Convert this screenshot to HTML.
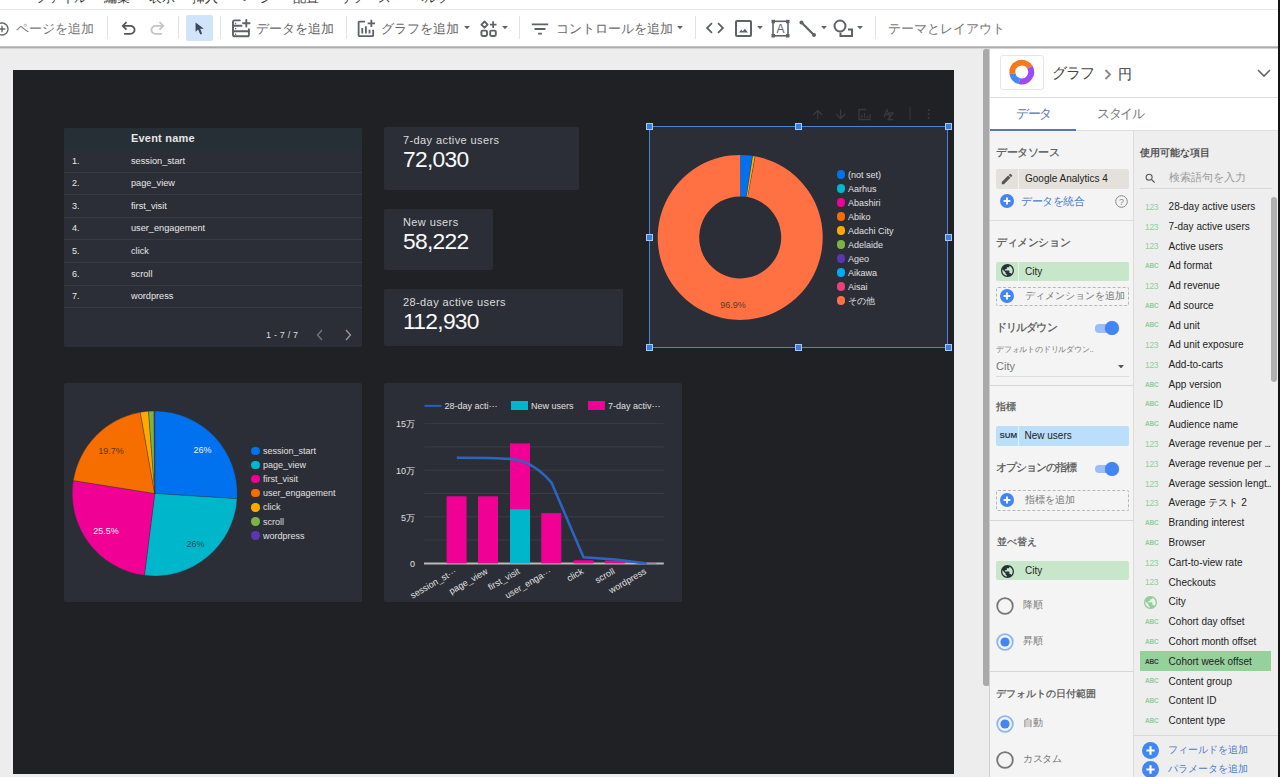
<!DOCTYPE html><html><head><meta charset="utf-8"><title>Looker Studio</title><style>*{box-sizing:border-box;margin:0;padding:0}
html,body{width:1280px;height:777px;overflow:hidden}
body{position:relative;background:#ededed;font-family:"Liberation Sans",sans-serif;color:#333}
.a{position:absolute;white-space:nowrap}
.sep{position:absolute;top:16px;width:1px;height:23px;background:#e3e3e3}
.tb{font-size:13px;color:#6b6b6b;line-height:13px}
.card{position:absolute;background:#2c2e37;border-radius:2px}
.dk{font-size:10px;color:#e8e8e8;line-height:10px}
.pl{font-size:11px;line-height:11px}
</style></head><body>
<div class="a" style="left:0;top:0;width:1280px;height:10px;background:#fff;border-bottom:1px solid #e6e6e6;overflow:hidden">
<div class="a" style="left:35px;top:-9.3px;font-size:13px;line-height:13px;color:#3a3a3a">ファイル</div>
<div class="a" style="left:104px;top:-9.3px;font-size:13px;line-height:13px;color:#3a3a3a">編集</div>
<div class="a" style="left:149px;top:-9.3px;font-size:13px;line-height:13px;color:#3a3a3a">表示</div>
<div class="a" style="left:192px;top:-9.3px;font-size:13px;line-height:13px;color:#3a3a3a">挿入</div>
<div class="a" style="left:233px;top:-9.3px;font-size:13px;line-height:13px;color:#3a3a3a">ページ</div>
<div class="a" style="left:293px;top:-9.3px;font-size:13px;line-height:13px;color:#3a3a3a">配置</div>
<div class="a" style="left:339px;top:-9.3px;font-size:13px;line-height:13px;color:#3a3a3a">リソース</div>
<div class="a" style="left:411px;top:-9.3px;font-size:13px;line-height:13px;color:#3a3a3a">ヘルプ</div>
</div>
<div class="a" style="left:0;top:10px;width:1280px;height:36px;background:#fff"></div>
<div class="a" style="left:0;top:46px;width:1280px;height:1px;background:#c4c4c4"></div>
<div class="a" style="left:0;top:47px;width:1280px;height:1px;background:#acacac"></div>
<div class="a" style="left:0;top:48px;width:1280px;height:1px;background:#d4d4d4"></div>
<svg class="a" style="left:-6px;top:21px" width="16" height="16" viewBox="0 0 24 24" ><path fill="#5f6368" d="M13 7h-2v4H7v2h4v4h2v-4h4v-2h-4V7zm-1-5C6.48 2 2 6.48 2 12s4.48 10 10 10 10-4.48 10-10S17.52 2 12 2zm0 18c-4.41 0-8-3.59-8-8s3.59-8 8-8 8 3.59 8 8-3.59 8-8 8z"/></svg>
<div class="a tb" style="left:16px;top:22px;color:#777">ページを追加</div>
<div class="sep" style="left:107px;top:16px"></div>
<div class="sep" style="left:178px;top:16px"></div>
<div class="sep" style="left:220px;top:16px"></div>
<div class="sep" style="left:346px;top:16px"></div>
<div class="sep" style="left:519px;top:16px"></div>
<div class="sep" style="left:695px;top:16px"></div>
<div class="sep" style="left:875px;top:16px"></div>
<svg class="a" style="left:117.8px;top:17.8px" width="21" height="21" viewBox="0 -960 960 960" ><path fill="#555" d="M280-200v-80h284q63 0 109.5-40T720-420q0-60-46.5-100T564-560H312l104 104-56 56-200-200 200-200 56 56-104 104h252q97 0 166.5 63T800-420q0 94-69.5 157T564-200H280Z"/></svg>
<svg class="a" style="left:146.8px;top:17.8px" width="21" height="21" viewBox="0 -960 960 960" ><path fill="#c4c4c4" d="M396-200q-97 0-166.5-63T160-420q0-94 69.5-157T396-640h252L544-744l56-56 200 200-200 200-56-56 104-104H396q-63 0-109.5 40T240-420q0 60 46.5 100T396-280h284v80H396Z"/></svg>
<div class="a" style="left:186px;top:14.8px;width:26.5px;height:26.5px;background:#d2e3fc;border-radius:2px"></div>
<svg class="a" style="left:194.8px;top:22.3px" width="10.5" height="13.5" viewBox="0 0 10 13" ><path fill="#3c4858" d="M0.5 0.5 L0.5 9.5 L3 7.3 L5 12 L6.8 11.2 L4.9 6.6 L8.5 6.6 Z"/></svg>
<svg class="a" style="left:231px;top:19px" width="20" height="19" viewBox="0 0 20 19" ><g fill="none" stroke="#5f6368" stroke-width="1.9" stroke-linecap="round"><path d="M8.8 1.4H3.6Q2 1.4 2 3V15.7Q2 17.3 3.6 17.3H16.3Q17.9 17.3 17.9 15.7V10.2"/><path d="M2 6.7H10.5M2 12.3H17.9M15.3 0.9V7.5M12 4.2H18.6"/></g><g fill="#5f6368"><path d="M4 3.4l1.6 1-1.6 1z"/><path d="M4 8.4l1.6 1-1.6 1z"/><path d="M4 14.2l1.6 1-1.6 1z"/></g></svg>
<div class="a tb" style="left:256px;top:22px;color:#666">データを追加</div>
<svg class="a" style="left:355.3px;top:17.6px" width="21.8" height="21.8" viewBox="0 0 24 24" ><path fill="#5f6368" d="M22 5v2h-3v3h-2V7h-3V5h3V2h2v3h3zm-3 14H5V5h6V3H5c-1.1 0-2 .9-2 2v14c0 1.1.9 2 2 2h14c1.1 0 2-.9 2-2v-6h-2v6zm-4-6v4h2v-4h-2zm-4 4h2V9h-2v8zm-2 0v-6H7v6h2z"/></svg>
<div class="a tb" style="left:381px;top:22px;color:#666">グラフを追加</div>
<svg class="a" style="left:463.5px;top:26.3px" width="6" height="3.3" viewBox="0 0 7 4" ><path d="M0 0h7L3.5 4z" fill="#5f6368"/></svg>
<svg class="a" style="left:480px;top:20px" width="18" height="17" viewBox="0 0 18 17" ><g fill="none" stroke="#5f6368" stroke-width="1.9" stroke-linejoin="round"><path d="M4.5 1.5 L7.6 4.6 L4.5 7.7 L1.4 4.6 Z"/><rect x="1.4" y="10.6" width="5.6" height="5.4" rx="1.2"/><rect x="10.2" y="10.6" width="5.6" height="5.4" rx="1.2"/></g><path fill="#5f6368" d="M12.3 1.3h1.7v6.6h-1.7zM9.9 3.75h6.6v1.7h-6.6z"/></svg>
<svg class="a" style="left:501.5px;top:26.3px" width="6" height="3.3" viewBox="0 0 7 4" ><path d="M0 0h7L3.5 4z" fill="#5f6368"/></svg>
<svg class="a" style="left:529px;top:18px" width="22" height="22" viewBox="0 0 24 24" ><path fill="#5f6368" d="M10 18h4v-2h-4v2zM3 6v2h18V6H3zm3 7h12v-2H6v2z"/></svg>
<div class="a tb" style="left:556px;top:22px;color:#6b6b6b">コントロールを追加</div>
<svg class="a" style="left:676.5px;top:26.3px" width="6" height="3.3" viewBox="0 0 7 4" ><path d="M0 0h7L3.5 4z" fill="#5f6368"/></svg>
<svg class="a" style="left:704px;top:17px" width="22" height="22" viewBox="0 0 24 24" ><path fill="#5f6368" d="M9.4 16.6L4.8 12l4.6-4.6L8 6l-6 6 6 6 1.4-1.4zm5.2 0l4.6-4.6-4.6-4.6L16 6l6 6-6 6-1.4-1.4z"/></svg>
<svg class="a" style="left:734px;top:19px" width="19" height="19" viewBox="0 0 19 19" ><rect x="2" y="2" width="15" height="15" rx="1" fill="none" stroke="#5f6368" stroke-width="2"/><path fill="#5f6368" d="M5 13.5 L7.3 10.5 L8.8 12.2 L10.8 9.8 L14 13.5Z"/></svg>
<svg class="a" style="left:756.5px;top:26.3px" width="6" height="3.3" viewBox="0 0 7 4" ><path d="M0 0h7L3.5 4z" fill="#5f6368"/></svg>
<svg class="a" style="left:771px;top:19px" width="19" height="19" viewBox="0 0 19 19" ><rect x="2" y="2.3" width="15" height="14.5" fill="none" stroke="#5f6368" stroke-width="1.6"/><g fill="#5f6368"><rect x="0.5" y="0.8" width="3.5" height="3.5"/><rect x="15" y="0.8" width="3.5" height="3.5"/><rect x="0.5" y="15" width="3.5" height="3.5"/><rect x="15" y="15" width="3.5" height="3.5"/></g><text x="9.5" y="14.3" font-size="12" text-anchor="middle" fill="#5f6368" font-family="Liberation Sans">A</text></svg>
<svg class="a" style="left:799px;top:20px" width="18" height="18" viewBox="0 0 18 18" ><path d="M2.5 2.5 L15 15" stroke="#5f6368" stroke-width="2.2"/><circle cx="2.5" cy="2.5" r="2" fill="#5f6368"/><circle cx="15" cy="15" r="2" fill="#5f6368"/></svg>
<svg class="a" style="left:820.5px;top:26.3px" width="6" height="3.3" viewBox="0 0 7 4" ><path d="M0 0h7L3.5 4z" fill="#5f6368"/></svg>
<svg class="a" style="left:833px;top:19px" width="21" height="19" viewBox="0 0 21 19" ><circle cx="7" cy="7" r="5.5" fill="none" stroke="#5f6368" stroke-width="2"/><path d="M15 10.5 H19 V17 H7.5 V13.5" fill="none" stroke="#5f6368" stroke-width="2"/></svg>
<svg class="a" style="left:856.5px;top:26.3px" width="6" height="3.3" viewBox="0 0 7 4" ><path d="M0 0h7L3.5 4z" fill="#5f6368"/></svg>
<div class="a tb" style="left:888px;top:22px;color:#777">テーマとレイアウト</div>
<div class="a" style="left:13px;top:70px;width:941px;height:704px;background:#202124"></div>
<div class="card" style="left:64px;top:128px;width:298px;height:219px;overflow:hidden">
<div class="a" style="left:0;top:0;width:298px;height:22px;background:#262f35"></div>
<div class="a" style="left:67px;top:5px;font-size:11px;line-height:11px;font-weight:bold;color:#e6e6e6;letter-spacing:0.2px">Event name</div>
<div class="a" style="left:0;top:43.6px;width:298px;height:1px;background:#383b45"></div>
<div class="a dk" style="left:8px;top:27.5px;font-size:9px">1.</div>
<div class="a dk" style="left:67px;top:27.5px;font-size:9.2px">session_start</div>
<div class="a" style="left:0;top:66.2px;width:298px;height:1px;background:#383b45"></div>
<div class="a dk" style="left:8px;top:50.1px;font-size:9px">2.</div>
<div class="a dk" style="left:67px;top:50.1px;font-size:9.2px">page_view</div>
<div class="a" style="left:0;top:88.8px;width:298px;height:1px;background:#383b45"></div>
<div class="a dk" style="left:8px;top:72.7px;font-size:9px">3.</div>
<div class="a dk" style="left:67px;top:72.7px;font-size:9.2px">first_visit</div>
<div class="a" style="left:0;top:111.4px;width:298px;height:1px;background:#383b45"></div>
<div class="a dk" style="left:8px;top:95.3px;font-size:9px">4.</div>
<div class="a dk" style="left:67px;top:95.3px;font-size:9.2px">user_engagement</div>
<div class="a" style="left:0;top:134.0px;width:298px;height:1px;background:#383b45"></div>
<div class="a dk" style="left:8px;top:117.9px;font-size:9px">5.</div>
<div class="a dk" style="left:67px;top:117.9px;font-size:9.2px">click</div>
<div class="a" style="left:0;top:156.6px;width:298px;height:1px;background:#383b45"></div>
<div class="a dk" style="left:8px;top:140.5px;font-size:9px">6.</div>
<div class="a dk" style="left:67px;top:140.5px;font-size:9.2px">scroll</div>
<div class="a" style="left:0;top:179.2px;width:298px;height:1px;background:#383b45"></div>
<div class="a dk" style="left:8px;top:163.1px;font-size:9px">7.</div>
<div class="a dk" style="left:67px;top:163.1px;font-size:9.2px">wordpress</div>
<div class="a dk" style="left:202px;top:202px;font-size:9px;color:#ddd;letter-spacing:0.2px">1 - 7 / 7</div>
<svg class="a" style="left:252px;top:201px" width="8" height="12" viewBox="0 0 8 12"><path d="M6 1L1.5 6 6 11" fill="none" stroke="#777" stroke-width="1.3"/></svg>
<svg class="a" style="left:280px;top:201px" width="8" height="12" viewBox="0 0 8 12"><path d="M2 1l4.5 5L2 11" fill="none" stroke="#999" stroke-width="1.3"/></svg>
</div>
<div class="card" style="left:384px;top:127px;width:195px;height:63px">
<div class="a" style="left:19px;top:8px;font-size:11px;line-height:11px;color:#dcdcdc;letter-spacing:0.4px">7-day active users</div>
<div class="a" style="left:19px;top:20.8px;font-size:22.8px;line-height:22.8px;color:#fafafa;letter-spacing:-0.7px">72,030</div>
</div>
<div class="card" style="left:384px;top:209px;width:109px;height:61px">
<div class="a" style="left:19px;top:8px;font-size:11px;line-height:11px;color:#dcdcdc;letter-spacing:0.4px">New users</div>
<div class="a" style="left:19px;top:20.8px;font-size:22.8px;line-height:22.8px;color:#fafafa;letter-spacing:-0.7px">58,222</div>
</div>
<div class="card" style="left:384px;top:289px;width:239px;height:57px">
<div class="a" style="left:19px;top:8px;font-size:11px;line-height:11px;color:#dcdcdc;letter-spacing:0.4px">28-day active users</div>
<div class="a" style="left:19px;top:20.8px;font-size:22.8px;line-height:22.8px;color:#fafafa;letter-spacing:-0.7px">112,930</div>
</div>
<div class="card" style="left:649px;top:126px;width:299px;height:222px"></div>
<svg class="a" style="left:0;top:0" width="1280" height="777"><path d="M740.20,154.90 A82.5,82.5 0 0 1 752.34,155.80 L746.23,196.85 A41,41 0 0 0 740.20,196.40 Z" fill="#0072f0"/><path d="M752.85,155.88 A82.5,82.5 0 0 1 754.89,156.22 L747.50,197.06 A41,41 0 0 0 746.49,196.88 Z" fill="#ffa800"/><path d="M755.40,156.31 A82.5,82.5 0 1 1 740.20,154.90 L740.20,196.40 A41,41 0 1 0 747.76,197.10 Z" fill="#ff7043"/><text x="733" y="307.5" font-size="9" fill="#5a3a30" text-anchor="middle" font-family="Liberation Sans">96.9%</text></svg>
<div class="a" style="left:836.8px;top:170.3px;width:8.4px;height:8.4px;border-radius:50%;background:#0072f0"></div>
<div class="a" style="left:848px;top:169.5px;font-size:9px;line-height:10px;color:#e0e0e0">(not set)</div>
<div class="a" style="left:836.8px;top:184.3px;width:8.4px;height:8.4px;border-radius:50%;background:#00b6cb"></div>
<div class="a" style="left:848px;top:183.5px;font-size:9px;line-height:10px;color:#e0e0e0">Aarhus</div>
<div class="a" style="left:836.8px;top:198.3px;width:8.4px;height:8.4px;border-radius:50%;background:#f10096"></div>
<div class="a" style="left:848px;top:197.5px;font-size:9px;line-height:10px;color:#e0e0e0">Abashiri</div>
<div class="a" style="left:836.8px;top:212.3px;width:8.4px;height:8.4px;border-radius:50%;background:#f66d00"></div>
<div class="a" style="left:848px;top:211.5px;font-size:9px;line-height:10px;color:#e0e0e0">Abiko</div>
<div class="a" style="left:836.8px;top:226.3px;width:8.4px;height:8.4px;border-radius:50%;background:#ffa800"></div>
<div class="a" style="left:848px;top:225.5px;font-size:9px;line-height:10px;color:#e0e0e0">Adachi City</div>
<div class="a" style="left:836.8px;top:240.3px;width:8.4px;height:8.4px;border-radius:50%;background:#7cb342"></div>
<div class="a" style="left:848px;top:239.5px;font-size:9px;line-height:10px;color:#e0e0e0">Adelaide</div>
<div class="a" style="left:836.8px;top:254.3px;width:8.4px;height:8.4px;border-radius:50%;background:#5e35b1"></div>
<div class="a" style="left:848px;top:253.5px;font-size:9px;line-height:10px;color:#e0e0e0">Ageo</div>
<div class="a" style="left:836.8px;top:268.3px;width:8.4px;height:8.4px;border-radius:50%;background:#03a9f4"></div>
<div class="a" style="left:848px;top:267.5px;font-size:9px;line-height:10px;color:#e0e0e0">Aikawa</div>
<div class="a" style="left:836.8px;top:282.3px;width:8.4px;height:8.4px;border-radius:50%;background:#ec407a"></div>
<div class="a" style="left:848px;top:281.5px;font-size:9px;line-height:10px;color:#e0e0e0">Aisai</div>
<div class="a" style="left:836.8px;top:296.3px;width:8.4px;height:8.4px;border-radius:50%;background:#ff7043"></div>
<div class="a" style="left:848px;top:295.5px;font-size:9px;line-height:10px;color:#e0e0e0">その他</div>
<div class="a" style="left:649px;top:126px;width:299px;height:222px;border:1px solid #4a84d4"></div>
<div class="a" style="left:645.5px;top:123.0px;width:7px;height:7px;background:#3b7ddd;border:1px solid #a8c8f5"></div>
<div class="a" style="left:645.5px;top:234.0px;width:7px;height:7px;background:#3b7ddd;border:1px solid #a8c8f5"></div>
<div class="a" style="left:645.5px;top:344.0px;width:7px;height:7px;background:#3b7ddd;border:1px solid #a8c8f5"></div>
<div class="a" style="left:795.0px;top:123.0px;width:7px;height:7px;background:#3b7ddd;border:1px solid #a8c8f5"></div>
<div class="a" style="left:795.0px;top:344.0px;width:7px;height:7px;background:#3b7ddd;border:1px solid #a8c8f5"></div>
<div class="a" style="left:944.5px;top:123.0px;width:7px;height:7px;background:#3b7ddd;border:1px solid #a8c8f5"></div>
<div class="a" style="left:944.5px;top:234.0px;width:7px;height:7px;background:#3b7ddd;border:1px solid #a8c8f5"></div>
<div class="a" style="left:944.5px;top:344.0px;width:7px;height:7px;background:#3b7ddd;border:1px solid #a8c8f5"></div>
<svg class="a" style="left:0;top:0" width="1280" height="777"><g fill="none" stroke="#37393f" stroke-width="1.3"><path d="M817.8 119.5V110.5M813.3 115L817.8 110.5 822.3 115"/><path d="M840.6 109.5V118.5M836.1 114L840.6 118.5 845.1 114"/><path d="M866 109.5H859V119.5H870V114"/><path d="M861.7 118V115M864.5 118V113M867.3 118V116"/><path d="M884 117L887 110 890 117M885 114.5H889M888 113H893L888 119.5H893"/></g><circle cx="868" cy="110.5" r="1.8" fill="none" stroke="{FC}" stroke-width="1.2"/><path d="M910 107V120" stroke="#34363c" stroke-width="1"/><g fill="#37393f"><circle cx="928.75" cy="110" r="1.1"/><circle cx="928.75" cy="114" r="1.1"/><circle cx="928.75" cy="118" r="1.1"/></g></svg>
<div class="card" style="left:64px;top:383px;width:298px;height:219px"></div>
<svg class="a" style="left:0;top:0" width="1280" height="777"><path d="M154.75,493.50 L154.75,411.00 A82.5,82.5 0 0 1 237.09,498.68 Z" fill="#0072f0" stroke="#2c2e37" stroke-width="0.35"/><path d="M154.75,493.50 L237.09,498.68 A82.5,82.5 0 0 1 144.41,575.35 Z" fill="#00b6cb" stroke="#2c2e37" stroke-width="0.35"/><path d="M154.75,493.50 L144.41,575.35 A82.5,82.5 0 0 1 73.27,480.59 Z" fill="#f10096" stroke="#2c2e37" stroke-width="0.35"/><path d="M154.75,493.50 L73.27,480.59 A82.5,82.5 0 0 1 140.31,412.27 Z" fill="#f66d00" stroke="#2c2e37" stroke-width="0.35"/><path d="M154.75,493.50 L140.31,412.27 A82.5,82.5 0 0 1 148.54,411.23 Z" fill="#ffa800" stroke="#2c2e37" stroke-width="0.35"/><path d="M154.75,493.50 L148.54,411.23 A82.5,82.5 0 0 1 153.97,411.00 Z" fill="#7cb342" stroke="#2c2e37" stroke-width="0.35"/><path d="M154.75,493.50 L153.97,411.00 A82.5,82.5 0 0 1 154.75,411.00 Z" fill="#5e35b1" stroke="#2c2e37" stroke-width="0.35"/><g font-family="Liberation Sans" font-size="9" text-anchor="middle"><text x="202.5" y="453" fill="#f0f0f0">26%</text><text x="195.5" y="547" fill="#1d4a55">26%</text><text x="106" y="533.5" fill="#f0f0f0">25.5%</text><text x="111" y="454" fill="#5a3a1a">19.7%</text></g></svg>
<div class="a" style="left:251.3px;top:446.8px;width:8.4px;height:8.4px;border-radius:50%;background:#0072f0"></div>
<div class="a" style="left:263px;top:446.0px;font-size:9px;line-height:10px;color:#e0e0e0">session_start</div>
<div class="a" style="left:251.3px;top:460.9px;width:8.4px;height:8.4px;border-radius:50%;background:#00b6cb"></div>
<div class="a" style="left:263px;top:460.1px;font-size:9px;line-height:10px;color:#e0e0e0">page_view</div>
<div class="a" style="left:251.3px;top:475.0px;width:8.4px;height:8.4px;border-radius:50%;background:#f10096"></div>
<div class="a" style="left:263px;top:474.2px;font-size:9px;line-height:10px;color:#e0e0e0">first_visit</div>
<div class="a" style="left:251.3px;top:489.1px;width:8.4px;height:8.4px;border-radius:50%;background:#f66d00"></div>
<div class="a" style="left:263px;top:488.3px;font-size:9px;line-height:10px;color:#e0e0e0">user_engagement</div>
<div class="a" style="left:251.3px;top:503.2px;width:8.4px;height:8.4px;border-radius:50%;background:#ffa800"></div>
<div class="a" style="left:263px;top:502.4px;font-size:9px;line-height:10px;color:#e0e0e0">click</div>
<div class="a" style="left:251.3px;top:517.3px;width:8.4px;height:8.4px;border-radius:50%;background:#7cb342"></div>
<div class="a" style="left:263px;top:516.5px;font-size:9px;line-height:10px;color:#e0e0e0">scroll</div>
<div class="a" style="left:251.3px;top:531.4px;width:8.4px;height:8.4px;border-radius:50%;background:#5e35b1"></div>
<div class="a" style="left:263px;top:530.6px;font-size:9px;line-height:10px;color:#e0e0e0">wordpress</div>
<div class="card" style="left:384px;top:383px;width:298px;height:219px"></div>
<svg class="a" style="left:0;top:0" width="1280" height="777"><g stroke="#3a3d46" stroke-width="1"><path d="M424.4 540.1H663.8"/><path d="M424.4 516.8H663.8"/><path d="M424.4 493.5H663.8"/><path d="M424.4 470.2H663.8"/><path d="M424.4 446.9H663.8"/><path d="M424.4 423.6H663.8"/></g><path d="M424 563.6H663.8" stroke="#b9b9b9" stroke-width="2"/><g font-family="Liberation Sans" font-size="9" fill="#e0e0e0" text-anchor="end"><text x="415" y="427.3">15万</text><text x="415" y="473.9">10万</text><text x="415" y="520.6">5万</text><text x="415" y="567.2">0</text></g><rect x="446.6" y="496.3" width="20" height="67.1" fill="#f10096"/><rect x="478" y="496.3" width="20" height="67.1" fill="#f10096"/><rect x="510" y="509.1" width="20" height="54.3" fill="#00b6cb"/><rect x="510" y="443.4" width="20" height="65.7" fill="#f10096"/><rect x="541.3" y="513.1" width="20" height="50.3" fill="#f10096"/><rect x="573.6" y="560.3" width="20" height="3.1" fill="#f10096"/><rect x="604.9" y="560.6" width="20" height="2.8" fill="#f10096"/><rect x="636.5" y="562.9" width="20" height="0.5" fill="#f10096"/><path d="M456.8,457.8 L489,458 C503,458.3 514,459 520,460.5 C532,464 545,474 551.7,483 L583.5,557.2 L615.3,559.4 L646.8,563.4" fill="none" stroke="#2c66c2" stroke-width="2.5" stroke-linejoin="round"/><g font-family="Liberation Sans" font-size="9" fill="#e0e0e0" text-anchor="end"><text transform="translate(457.1,573) rotate(-30)">session_st···</text><text transform="translate(488.5,573) rotate(-30)">page_view</text><text transform="translate(520.5,573) rotate(-30)">first_visit</text><text transform="translate(551.8,573) rotate(-30)">user_enga···</text><text transform="translate(584.1,573) rotate(-30)">click</text><text transform="translate(615.4,573) rotate(-30)">scroll</text><text transform="translate(647.0,573) rotate(-30)">wordpress</text></g><path d="M424.5 405.9H441.5" stroke="#2c5fb5" stroke-width="2"/><rect x="511" y="401" width="17" height="9" fill="#00b6cb"/><rect x="588" y="401" width="17" height="9" fill="#f10096"/><g font-family="Liberation Sans" font-size="9" fill="#e0e0e0"><text x="444.5" y="409">28-day acti···</text><text x="531" y="409">New users</text><text x="608" y="409">7-day activ···</text></g></svg>
<div class="a" style="left:983px;top:49px;width:6.5px;height:637px;background:#a9a9a9;border-radius:3px"></div>
<div class="a" style="left:989px;top:49px;width:1px;height:728px;background:#cfcfcf"></div>
<div class="a" style="left:990px;top:49px;width:290px;height:82px;background:#fff"></div>
<div class="a" style="left:1000px;top:55px;width:44px;height:35px;border:1px solid #e6e6e6;border-radius:3px;background:#fff"></div>
<svg class="a" style="left:0;top:0" width="1280" height="777"><path d="M1009.54,74.20 A12.4,12.4 0 0 1 1032.49,65.85 L1027.29,68.85 A6.4,6.4 0 0 0 1015.45,73.16 Z" fill="#f57a1c"/><path d="M1032.49,65.85 A12.4,12.4 0 0 1 1018.54,84.03 L1020.09,78.23 A6.4,6.4 0 0 0 1027.29,68.85 Z" fill="#9d4bf6"/><path d="M1018.54,84.03 A12.4,12.4 0 0 1 1009.54,74.20 L1015.45,73.16 A6.4,6.4 0 0 0 1020.09,78.23 Z" fill="#4688f4"/></svg>
<div class="a" style="left:1051.5px;top:65px;font-size:15px;line-height:15px;color:#444;letter-spacing:-0.7px">グラフ</div>
<svg class="a" style="left:1103.5px;top:69px" width="8" height="11" viewBox="0 0 8 11"><path d="M1.5 1l4.5 4.5L1.5 10" fill="none" stroke="#888" stroke-width="1.8"/></svg>
<div class="a" style="left:1118px;top:66.5px;font-size:14px;line-height:14px;color:#333">円</div>
<svg class="a" style="left:1257px;top:69px" width="14" height="9" viewBox="0 0 14 9"><path d="M1 1l6 6 6-6" fill="none" stroke="#666" stroke-width="1.6"/></svg>
<div class="a" style="left:990px;top:97px;width:290px;height:1px;background:#dedede"></div>
<div class="a" style="left:1016px;top:106.5px;font-size:13px;line-height:13px;color:#5a74a8;letter-spacing:-1.5px">データ</div>
<div class="a" style="left:1097px;top:106.5px;font-size:13px;line-height:13px;color:#777;letter-spacing:-1.5px">スタイル</div>
<div class="a" style="left:990px;top:130px;width:290px;height:1px;background:#e0e0e0"></div>
<div class="a" style="left:990px;top:129px;width:86px;height:2px;background:#5a77b5"></div>
<div class="a" style="left:990px;top:131px;width:143px;height:646px;background:#f4f4f4"></div>
<div class="a" style="left:1133px;top:131px;width:147px;height:646px;background:#eeeeee;border-left:1px solid #dcdcdc"></div>
<div class="a" style="left:1278px;top:0;width:2px;height:777px;background:#141414"></div>
<div class="a" style="left:996px;top:147.2px;font-size:10.5px;line-height:10.5px;color:#555;letter-spacing:-0.4px;-webkit-text-stroke:0.25px #555">データソース</div>
<div class="a" style="left:996px;top:169px;width:133px;height:20px;background:#e4e0dc;border-radius:2px"></div>
<div class="a" style="left:1018px;top:169px;width:1px;height:20px;background:rgba(255,255,255,.55)"></div>
<div class="a" style="left:1025px;top:174.4px;font-size:10px;line-height:10px;color:#222;">Google Analytics 4</div>
<svg class="a" style="left:1000px;top:172px" width="14" height="14" viewBox="0 0 24 24"><path fill="#555" d="M3 17.25V21h3.75L17.81 9.94l-3.75-3.75L3 17.25zM20.71 7.04a1 1 0 000-1.41l-2.34-2.34a1 1 0 00-1.41 0l-1.83 1.83 3.75 3.75 1.83-1.83z"/></svg>
<svg class="a" style="left:999.6px;top:194.4px" width="14" height="14" viewBox="0 0 14 14"><circle cx="7" cy="7" r="7" fill="#4285f4"/><path d="M7 3.6v6.8M3.6 7h6.8" stroke="#fff" stroke-width="1.8"/></svg>
<div class="a" style="left:1021px;top:195.7px;font-size:10.5px;line-height:10.5px;color:#4a7bd0;letter-spacing:-0.5px">データを統合</div>
<svg class="a" style="left:1115px;top:195px" width="13" height="13" viewBox="0 0 13 13"><circle cx="6.5" cy="6.5" r="5.8" fill="none" stroke="#888" stroke-width="1"/><text x="6.5" y="10" font-size="9" text-anchor="middle" fill="#888" font-family="Liberation Sans">?</text></svg>
<div class="a" style="left:990px;top:220px;width:143px;height:1px;background:#dcdcdc"></div>
<div class="a" style="left:996px;top:237.2px;font-size:10.5px;line-height:10.5px;color:#555;letter-spacing:-0.4px;-webkit-text-stroke:0.25px #555">ディメンション</div>
<div class="a" style="left:996px;top:262px;width:133px;height:19px;background:#c8e6c9;border-radius:2px"></div>
<div class="a" style="left:1018px;top:262px;width:1px;height:19px;background:rgba(255,255,255,.55)"></div>
<div class="a" style="left:1025px;top:266.9px;font-size:10px;line-height:10px;color:#222;">City</div>
<svg class="a" style="left:1000.8px;top:264.2px" width="13" height="13" viewBox="2 2 20 20"><path fill="#263238" d="M12 2C6.48 2 2 6.48 2 12s4.48 10 10 10 10-4.48 10-10S17.52 2 12 2zm-1 17.93c-3.95-.49-7-3.85-7-7.93 0-.62.08-1.21.21-1.79L9 15v1c0 1.1.9 2 2 2v1.93zm6.9-2.54c-.26-.81-1-1.39-1.9-1.39h-1v-3c0-.55-.45-1-1-1H8v-2h2c.55 0 1-.45 1-1V7h2c1.1 0 2-.9 2-2v-.41c2.93 1.19 5 4.06 5 7.41 0 2.08-.8 3.97-2.1 5.39z"/></svg>
<div class="a" style="left:996px;top:287px;width:133px;height:19px;border:1px dashed #b8b8b8;border-radius:2px"></div>
<svg class="a" style="left:1000.3px;top:288.8px" width="14" height="14" viewBox="0 0 14 14"><circle cx="7" cy="7" r="7" fill="#4285f4"/><path d="M7 3.6v6.8M3.6 7h6.8" stroke="#fff" stroke-width="1.8"/></svg>
<div class="a" style="left:1025px;top:290.5px;font-size:10px;line-height:10px;color:#777;">ディメンションを追加</div>
<div class="a" style="left:995.5px;top:321.5px;font-size:11px;line-height:11px;color:#555;letter-spacing:-0.8px;-webkit-text-stroke:0.25px #555">ドリルダウン</div>
<div class="a" style="left:1095px;top:324px;width:20px;height:8.5px;border-radius:4px;background:#9dbdf6"></div>
<div class="a" style="left:1105px;top:321px;width:14px;height:14px;border-radius:50%;background:#4285f4;box-shadow:0 0 1px rgba(0,0,0,.3)"></div>
<div class="a" style="left:996px;top:345.5px;font-size:8px;line-height:8px;color:#777;letter-spacing:-0.2px">デフォルトのドリルダウン..</div>
<div class="a" style="left:996px;top:361.2px;font-size:11px;line-height:11px;color:#777;">City</div>
<svg class="a" style="left:1118px;top:364.5px" width="6" height="3.5" viewBox="0 0 7 4"><path d="M0 0h7L3.5 4z" fill="#555"/></svg>
<div class="a" style="left:996px;top:376px;width:133px;height:1px;background:#dcdcdc"></div>
<div class="a" style="left:990px;top:385px;width:143px;height:1px;background:#d6d6d6"></div>
<div class="a" style="left:996px;top:402.0px;font-size:10px;line-height:10px;color:#555;-webkit-text-stroke:0.25px #555">指標</div>
<div class="a" style="left:996px;top:426px;width:133px;height:20px;background:#bbdefb;border-radius:2px"></div>
<div class="a" style="left:1018px;top:426px;width:1px;height:20px;background:rgba(255,255,255,.6)"></div>
<div class="a" style="left:999.5px;top:432.4px;font-size:8px;line-height:8px;color:#2b3b4f;font-weight:bold;">SUM</div>
<div class="a" style="left:1024.5px;top:430.9px;font-size:10px;line-height:10px;color:#222;">New users</div>
<div class="a" style="left:995.5px;top:462.3px;font-size:11px;line-height:11px;color:#555;letter-spacing:-1px;-webkit-text-stroke:0.25px #555">オプションの指標</div>
<div class="a" style="left:1095px;top:464.7px;width:20px;height:8.5px;border-radius:4px;background:#9dbdf6"></div>
<div class="a" style="left:1105px;top:461.7px;width:14px;height:14px;border-radius:50%;background:#4285f4;box-shadow:0 0 1px rgba(0,0,0,.3)"></div>
<div class="a" style="left:996px;top:490px;width:133px;height:21px;border:1px dashed #b8b8b8;border-radius:2px"></div>
<svg class="a" style="left:1000.3px;top:492.7px" width="14" height="14" viewBox="0 0 14 14"><circle cx="7" cy="7" r="7" fill="#4285f4"/><path d="M7 3.6v6.8M3.6 7h6.8" stroke="#fff" stroke-width="1.8"/></svg>
<div class="a" style="left:1024.5px;top:494.5px;font-size:10px;line-height:10px;color:#777;">指標を追加</div>
<div class="a" style="left:990px;top:520px;width:143px;height:1px;background:#d6d6d6"></div>
<div class="a" style="left:996.5px;top:537.0px;font-size:10px;line-height:10px;color:#555;-webkit-text-stroke:0.25px #555">並べ替え</div>
<div class="a" style="left:996px;top:561px;width:133px;height:19px;background:#c8e6c9;border-radius:2px"></div>
<div class="a" style="left:1025px;top:565.9px;font-size:10px;line-height:10px;color:#222;">City</div>
<svg class="a" style="left:1000.5px;top:564.9px" width="13" height="13" viewBox="2 2 20 20"><path fill="#263238" d="M12 2C6.48 2 2 6.48 2 12s4.48 10 10 10 10-4.48 10-10S17.52 2 12 2zm-1 17.93c-3.95-.49-7-3.85-7-7.93 0-.62.08-1.21.21-1.79L9 15v1c0 1.1.9 2 2 2v1.93zm6.9-2.54c-.26-.81-1-1.39-1.9-1.39h-1v-3c0-.55-.45-1-1-1H8v-2h2c.55 0 1-.45 1-1V7h2c1.1 0 2-.9 2-2v-.41c2.93 1.19 5 4.06 5 7.41 0 2.08-.8 3.97-2.1 5.39z"/></svg>
<svg class="a" style="left:996px;top:596.6px" width="18" height="18" viewBox="0 0 18 18"><circle cx="9" cy="9" r="7.8" fill="none" stroke="#777" stroke-width="1.8"/></svg>
<div class="a" style="left:1023px;top:600.1px;font-size:10px;line-height:10px;color:#777;">降順</div>
<svg class="a" style="left:996px;top:632.6px" width="18" height="18" viewBox="0 0 18 18"><circle cx="9" cy="9" r="7.8" fill="none" stroke="#8fb4f2" stroke-width="1.8"/><circle cx="9" cy="9" r="4.6" fill="#4285f4"/></svg>
<div class="a" style="left:1023px;top:636.1px;font-size:10px;line-height:10px;color:#777;">昇順</div>
<div class="a" style="left:990px;top:671px;width:143px;height:1px;background:#d6d6d6"></div>
<div class="a" style="left:996px;top:688.5px;font-size:10px;line-height:10px;color:#555;-webkit-text-stroke:0.25px #555">デフォルトの日付範囲</div>
<svg class="a" style="left:995.8px;top:714.5px" width="18" height="18" viewBox="0 0 18 18"><circle cx="9" cy="9" r="7.8" fill="none" stroke="#8fb4f2" stroke-width="1.8"/><circle cx="9" cy="9" r="4.6" fill="#4285f4"/></svg>
<div class="a" style="left:1023px;top:718.0px;font-size:10px;line-height:10px;color:#777;">自動</div>
<svg class="a" style="left:995.8px;top:750.5px" width="18" height="18" viewBox="0 0 18 18"><circle cx="9" cy="9" r="7.8" fill="none" stroke="#777" stroke-width="1.8"/></svg>
<div class="a" style="left:1023px;top:754.0px;font-size:10px;line-height:10px;color:#777;letter-spacing:-0.4px">カスタム</div>
<div class="a" style="left:1140px;top:147.7px;font-size:10px;line-height:10px;color:#555;font-weight:bold;">使用可能な項目</div>
<svg class="a" style="left:1144px;top:172px" width="13" height="13" viewBox="0 0 24 24"><path fill="#555" d="M15.5 14h-.79l-.28-.27A6.47 6.47 0 0016 9.5 6.5 6.5 0 109.5 16c1.61 0 3.09-.59 4.23-1.57l.27.28v.79l5 4.99L20.49 19l-4.99-5zm-6 0C7.01 14 5 11.99 5 9.5S7.01 5 9.5 5 14 7.01 14 9.5 11.99 14 9.5 14z"/></svg>
<div class="a" style="left:1168.6px;top:172.2px;font-size:10.7px;line-height:10.7px;color:#999;">検索語句を入力</div>
<div class="a" style="left:1140px;top:188px;width:132px;height:1px;background:#d8d8d8"></div>
<div class="a" style="left:1145px;top:202.8px;font-size:8.5px;line-height:8.5px;color:#8fcf98;letter-spacing:-0.3px">123</div>
<div class="a" style="left:1168.6px;top:202.0px;font-size:10px;line-height:10px;color:#222;">28-day active users</div>
<div class="a" style="left:1145px;top:222.5px;font-size:8.5px;line-height:8.5px;color:#8fcf98;letter-spacing:-0.3px">123</div>
<div class="a" style="left:1168.6px;top:221.8px;font-size:10px;line-height:10px;color:#222;">7-day active users</div>
<div class="a" style="left:1145px;top:242.3px;font-size:8.5px;line-height:8.5px;color:#8fcf98;letter-spacing:-0.3px">123</div>
<div class="a" style="left:1168.6px;top:241.5px;font-size:10px;line-height:10px;color:#222;">Active users</div>
<div class="a" style="left:1145px;top:263.1px;font-size:6.5px;line-height:6.5px;color:#93cc9b;font-weight:bold;letter-spacing:-0.2px">ABC</div>
<div class="a" style="left:1168.6px;top:261.3px;font-size:10px;line-height:10px;color:#222;">Ad format</div>
<div class="a" style="left:1145px;top:281.8px;font-size:8.5px;line-height:8.5px;color:#8fcf98;letter-spacing:-0.3px">123</div>
<div class="a" style="left:1168.6px;top:281.1px;font-size:10px;line-height:10px;color:#222;">Ad revenue</div>
<div class="a" style="left:1145px;top:302.6px;font-size:6.5px;line-height:6.5px;color:#93cc9b;font-weight:bold;letter-spacing:-0.2px">ABC</div>
<div class="a" style="left:1168.6px;top:300.8px;font-size:10px;line-height:10px;color:#222;">Ad source</div>
<div class="a" style="left:1145px;top:322.4px;font-size:6.5px;line-height:6.5px;color:#93cc9b;font-weight:bold;letter-spacing:-0.2px">ABC</div>
<div class="a" style="left:1168.6px;top:320.6px;font-size:10px;line-height:10px;color:#222;">Ad unit</div>
<div class="a" style="left:1145px;top:341.1px;font-size:8.5px;line-height:8.5px;color:#8fcf98;letter-spacing:-0.3px">123</div>
<div class="a" style="left:1168.6px;top:340.4px;font-size:10px;line-height:10px;color:#222;">Ad unit exposure</div>
<div class="a" style="left:1145px;top:360.9px;font-size:8.5px;line-height:8.5px;color:#8fcf98;letter-spacing:-0.3px">123</div>
<div class="a" style="left:1168.6px;top:360.2px;font-size:10px;line-height:10px;color:#222;">Add-to-carts</div>
<div class="a" style="left:1145px;top:381.7px;font-size:6.5px;line-height:6.5px;color:#93cc9b;font-weight:bold;letter-spacing:-0.2px">ABC</div>
<div class="a" style="left:1168.6px;top:379.9px;font-size:10px;line-height:10px;color:#222;">App version</div>
<div class="a" style="left:1145px;top:401.4px;font-size:6.5px;line-height:6.5px;color:#93cc9b;font-weight:bold;letter-spacing:-0.2px">ABC</div>
<div class="a" style="left:1168.6px;top:399.7px;font-size:10px;line-height:10px;color:#222;">Audience ID</div>
<div class="a" style="left:1145px;top:421.2px;font-size:6.5px;line-height:6.5px;color:#93cc9b;font-weight:bold;letter-spacing:-0.2px">ABC</div>
<div class="a" style="left:1168.6px;top:419.5px;font-size:10px;line-height:10px;color:#222;">Audience name</div>
<div class="a" style="left:1145px;top:440.0px;font-size:8.5px;line-height:8.5px;color:#8fcf98;letter-spacing:-0.3px">123</div>
<div class="a" style="left:1168.6px;top:439.2px;font-size:10px;line-height:10px;color:#222;">Average revenue per <span style="letter-spacing:-0.9px">...</span></div>
<div class="a" style="left:1145px;top:459.8px;font-size:8.5px;line-height:8.5px;color:#8fcf98;letter-spacing:-0.3px">123</div>
<div class="a" style="left:1168.6px;top:459.0px;font-size:10px;line-height:10px;color:#222;">Average revenue per <span style="letter-spacing:-0.9px">...</span></div>
<div class="a" style="left:1145px;top:479.5px;font-size:8.5px;line-height:8.5px;color:#8fcf98;letter-spacing:-0.3px">123</div>
<div class="a" style="left:1168.6px;top:478.8px;font-size:10px;line-height:10px;color:#222;">Average session lengt<span style="letter-spacing:-0.9px">..</span></div>
<div class="a" style="left:1145px;top:499.3px;font-size:8.5px;line-height:8.5px;color:#8fcf98;letter-spacing:-0.3px">123</div>
<div class="a" style="left:1168.6px;top:497.6px;font-size:10px;line-height:10px;color:#222;">Average テスト 2</div>
<div class="a" style="left:1145px;top:520.1px;font-size:6.5px;line-height:6.5px;color:#93cc9b;font-weight:bold;letter-spacing:-0.2px">ABC</div>
<div class="a" style="left:1168.6px;top:518.3px;font-size:10px;line-height:10px;color:#222;">Branding interest</div>
<div class="a" style="left:1145px;top:539.8px;font-size:6.5px;line-height:6.5px;color:#93cc9b;font-weight:bold;letter-spacing:-0.2px">ABC</div>
<div class="a" style="left:1168.6px;top:538.1px;font-size:10px;line-height:10px;color:#222;">Browser</div>
<div class="a" style="left:1145px;top:558.6px;font-size:8.5px;line-height:8.5px;color:#8fcf98;letter-spacing:-0.3px">123</div>
<div class="a" style="left:1168.6px;top:557.9px;font-size:10px;line-height:10px;color:#222;">Cart-to-view rate</div>
<div class="a" style="left:1145px;top:578.4px;font-size:8.5px;line-height:8.5px;color:#8fcf98;letter-spacing:-0.3px">123</div>
<div class="a" style="left:1168.6px;top:577.6px;font-size:10px;line-height:10px;color:#222;">Checkouts</div>
<svg class="a" style="left:1144px;top:595.5px" width="13" height="13" viewBox="2 2 20 20"><path fill="#8fcf98" d="M12 2C6.48 2 2 6.48 2 12s4.48 10 10 10 10-4.48 10-10S17.52 2 12 2zm-1 17.93c-3.95-.49-7-3.85-7-7.93 0-.62.08-1.21.21-1.79L9 15v1c0 1.1.9 2 2 2v1.93zm6.9-2.54c-.26-.81-1-1.39-1.9-1.39h-1v-3c0-.55-.45-1-1-1H8v-2h2c.55 0 1-.45 1-1V7h2c1.1 0 2-.9 2-2v-.41c2.93 1.19 5 4.06 5 7.41 0 2.08-.8 3.97-2.1 5.39z"/></svg>
<div class="a" style="left:1168.6px;top:597.4px;font-size:10px;line-height:10px;color:#222;">City</div>
<div class="a" style="left:1145px;top:618.9px;font-size:6.5px;line-height:6.5px;color:#93cc9b;font-weight:bold;letter-spacing:-0.2px">ABC</div>
<div class="a" style="left:1168.6px;top:617.2px;font-size:10px;line-height:10px;color:#222;">Cohort day offset</div>
<div class="a" style="left:1145px;top:638.7px;font-size:6.5px;line-height:6.5px;color:#93cc9b;font-weight:bold;letter-spacing:-0.2px">ABC</div>
<div class="a" style="left:1168.6px;top:636.9px;font-size:10px;line-height:10px;color:#222;">Cohort month offset</div>
<div class="a" style="left:1140px;top:651.3px;width:131px;height:20px;background:#94d19b"></div>
<div class="a" style="left:1145px;top:658.5px;font-size:6.5px;line-height:6.5px;color:#3a3a3a;font-weight:bold;letter-spacing:-0.2px">ABC</div>
<div class="a" style="left:1168.6px;top:656.7px;font-size:10px;line-height:10px;color:#222;">Cohort week offset</div>
<div class="a" style="left:1145px;top:678.2px;font-size:6.5px;line-height:6.5px;color:#93cc9b;font-weight:bold;letter-spacing:-0.2px">ABC</div>
<div class="a" style="left:1168.6px;top:676.5px;font-size:10px;line-height:10px;color:#222;">Content group</div>
<div class="a" style="left:1145px;top:698.0px;font-size:6.5px;line-height:6.5px;color:#93cc9b;font-weight:bold;letter-spacing:-0.2px">ABC</div>
<div class="a" style="left:1168.6px;top:696.2px;font-size:10px;line-height:10px;color:#222;">Content ID</div>
<div class="a" style="left:1145px;top:717.8px;font-size:6.5px;line-height:6.5px;color:#93cc9b;font-weight:bold;letter-spacing:-0.2px">ABC</div>
<div class="a" style="left:1168.6px;top:716.0px;font-size:10px;line-height:10px;color:#222;">Content type</div>
<div class="a" style="left:1271px;top:197px;width:6px;height:185px;background:#b0b0b0;border-radius:3px"></div>
<div class="a" style="left:1134px;top:735px;width:144px;height:1px;background:#d8d8d8"></div>
<svg class="a" style="left:1141.5px;top:741.7px" width="17.0" height="17.0" viewBox="0 0 14 14"><circle cx="7" cy="7" r="7" fill="#4285f4"/><path d="M7 3.6v6.8M3.6 7h6.8" stroke="#fff" stroke-width="1.8"/></svg>
<div class="a" style="left:1168px;top:744.5px;font-size:10px;line-height:10px;color:#4a7bd0;">フィールドを追加</div>
<svg class="a" style="left:1141.5px;top:760.8px" width="17.0" height="17.0" viewBox="0 0 14 14"><circle cx="7" cy="7" r="7" fill="#4285f4"/><path d="M7 3.6v6.8M3.6 7h6.8" stroke="#fff" stroke-width="1.8"/></svg>
<div class="a" style="left:1168px;top:763.5px;font-size:10px;line-height:10px;color:#4a7bd0;">パラメータを追加</div>
</body></html>
